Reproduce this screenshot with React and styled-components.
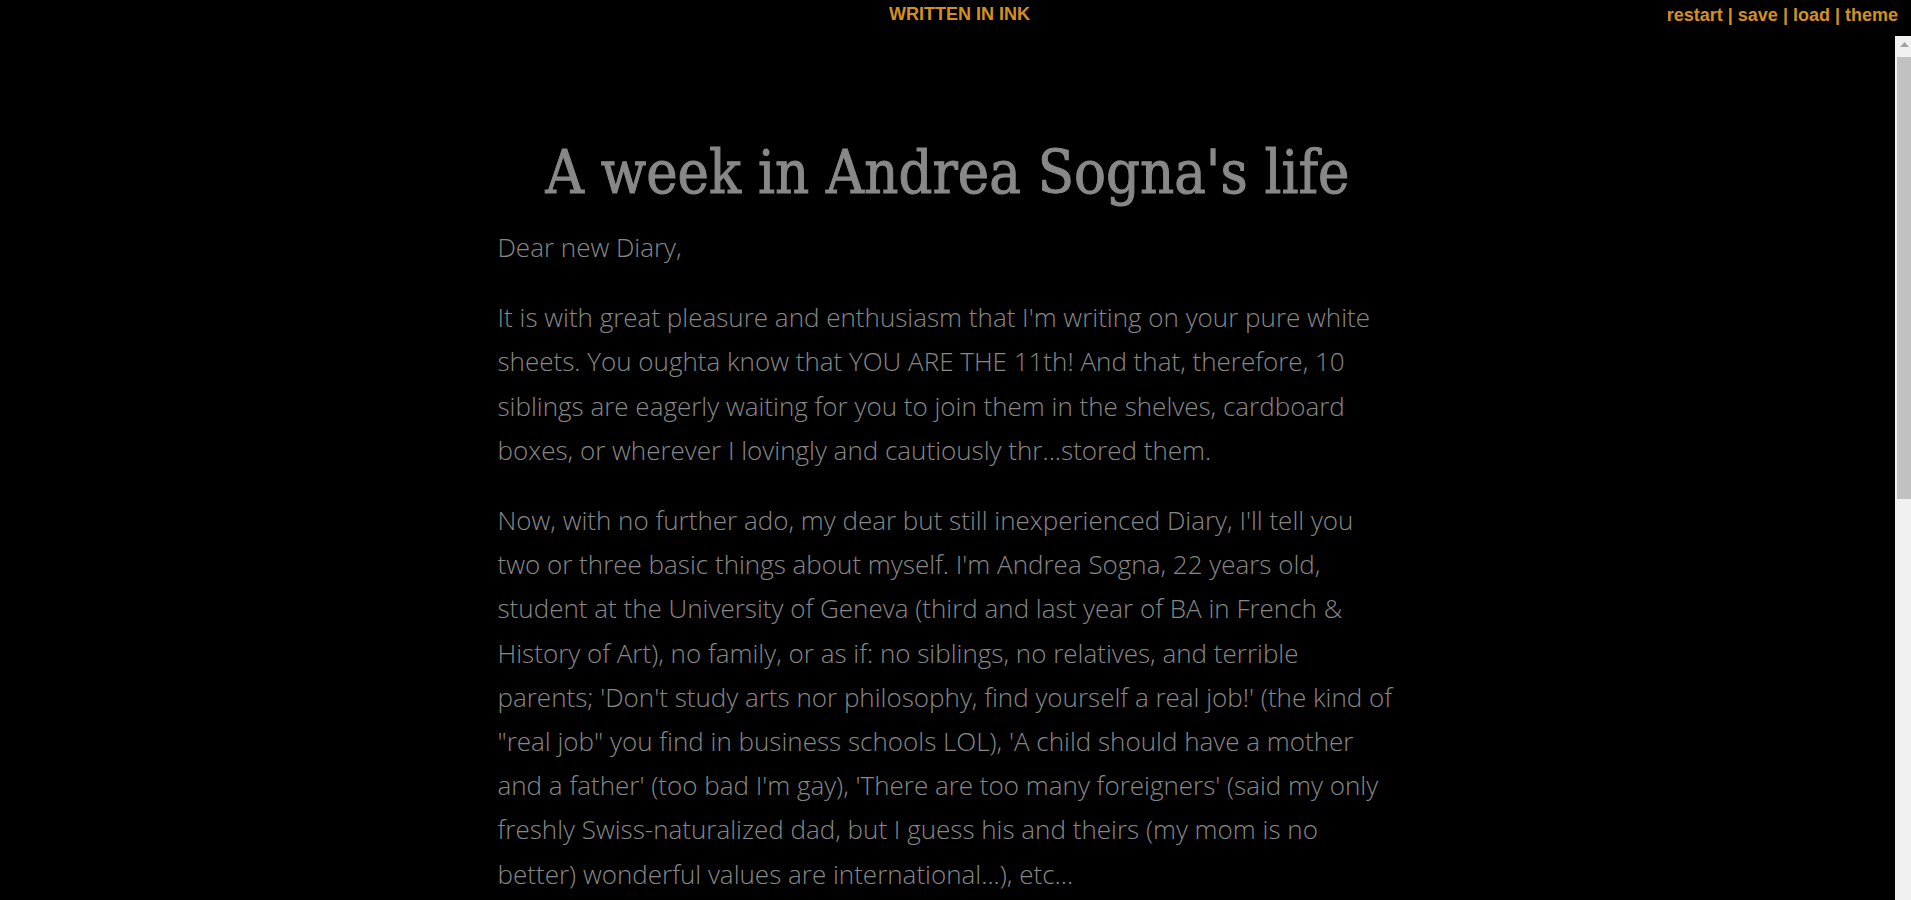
import React from 'react';
import styled, {createGlobalStyle} from 'styled-components';

const GlobalStyle = createGlobalStyle`
    html, body {
        margin: 0;
        padding: 0;
        height: 100%;
        background: #000;
        overflow: hidden;
    }
`;

const Page = styled.div`
    display: flex;
    flex-direction: column;
    height: 100vh;
    background: #000;
`;

const TopBar = styled.header`
    display: grid;
    grid-template-columns: 1fr auto 1fr;
    align-items: start;
    height: 36px;
    flex-shrink: 0;
    font-family: "Liberation Sans", Arial, sans-serif;
    font-weight: bold;
    font-size: 18px;
    color: #d4901c;
`;

const GameTitle = styled.div`
    grid-column: 2;
    padding-top: 4px;
    padding-left: 8px;
`;

const Controls = styled.nav`
    grid-column: 3;
    justify-self: end;
    padding-top: 5px;
    padding-right: 13px;
`;

const ControlLink = styled.a`
    color: inherit;
    text-decoration: none;
    cursor: pointer;
`;

const Divider = styled.span`
    padding: 0 5px;
`;

const Body = styled.div`
    flex: 1;
    min-height: 0;
    display: flex;
`;

const Scroller = styled.main`
    flex: 1;
    overflow-y: scroll;
    scrollbar-width: none;

    &::-webkit-scrollbar {
        display: none;
    }
`;

// drawn scrollbar, the headless browser hides the native one
const ScrollRail = styled.div`
    width: 16px;
    flex-shrink: 0;
    display: flex;
    flex-direction: column;
    background: #f1f1f1;
`;

const ScrollArrow = styled.div`
    height: 17px;
    display: flex;
    align-items: center;
    justify-content: center;
    padding-left: 3px;
`;

const ScrollThumb = styled.div`
    margin: 4px 0 0 2px;
    height: 442px;
    background: #c1c1c1;
`;

const Story = styled.div`
    max-width: 900px;
    margin: 0 auto;
    min-height: 1640px;
`;

const Header = styled.div`
    padding-top: 101px;
`;

const Title = styled.h1`
    margin: 0;
    font-family: "DejaVu Serif Condensed", "DejaVu Serif", serif;
    font-stretch: condensed;
    font-weight: normal;
    font-size: 59px;
    line-height: 72px;
    text-align: center;
    color: #888;
    -webkit-text-stroke: 1px #888;
`;

const Paragraph = styled.p`
    margin: ${({$first}) => $first ? '16px' : '26px'} 0 26px;
    font-family: "Open Sans", sans-serif;
    font-weight: 300;
    font-size: 26px;
    line-height: 44.2px;
    color: #888;
`;

const paragraphs = [
    "Dear new Diary,",
    "It is with great pleasure and enthusiasm that I'm writing on your pure white sheets. You oughta know that YOU ARE THE 11th! And that, therefore, 10 siblings are eagerly waiting for you to join them in the shelves, cardboard boxes, or wherever I lovingly and cautiously thr...stored them.",
    "Now, with no further ado, my dear but still inexperienced Diary, I'll tell you two or three basic things about myself. I'm Andrea Sogna, 22 years old, student at the University of Geneva (third and last year of BA in French & History of Art), no family, or as if: no siblings, no relatives, and terrible parents; 'Don't study arts nor philosophy, find yourself a real job!' (the kind of \"real job\" you find in business schools LOL), 'A child should have a mother and a father' (too bad I'm gay), 'There are too many foreigners' (said my only freshly Swiss-naturalized dad, but I guess his and theirs (my mom is no better) wonderful values are international...), etc...",
];

const controls = ['restart', 'save', 'load', 'theme'];

export default function App() {
    return (
        <Page>
            <GlobalStyle/>
            <TopBar>
                <GameTitle>WRITTEN IN INK</GameTitle>
                <Controls>
                    {controls.map((name, i) => (
                        <React.Fragment key={name}>
                            {i > 0 && <Divider>|</Divider>}
                            <ControlLink>{name}</ControlLink>
                        </React.Fragment>
                    ))}
                </Controls>
            </TopBar>
            <Body>
                <Scroller>
                    <Story>
                        <Header>
                            <Title>A week in Andrea Sogna's life</Title>
                        </Header>
                        {paragraphs.map((text, i) => (
                            <Paragraph key={i} $first={i === 0}>{text}</Paragraph>
                        ))}
                    </Story>
                </Scroller>
                <ScrollRail>
                    <ScrollArrow>
                        <svg width="9" height="5" viewBox="0 0 9 5">
                            <path d="M0 5 L4.5 0 L9 5 Z" fill="#a3a3a3"/>
                        </svg>
                    </ScrollArrow>
                    <ScrollThumb/>
                </ScrollRail>
            </Body>
        </Page>
    );
}
